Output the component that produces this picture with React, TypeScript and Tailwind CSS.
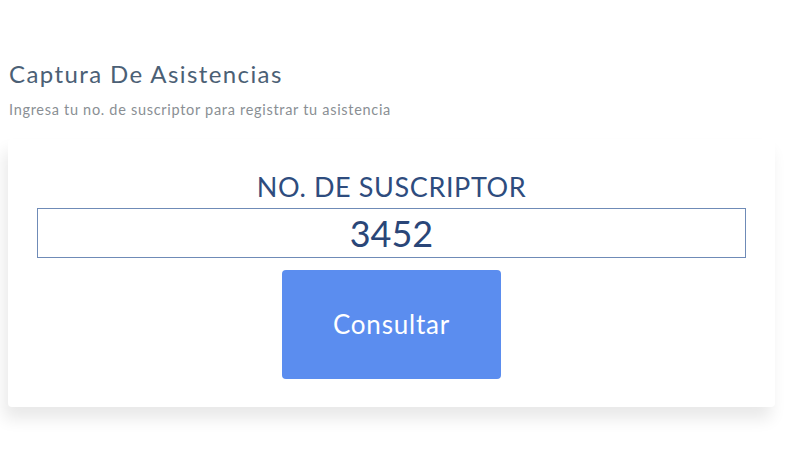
import { useState } from "react";

function App() {
	const [numero, setNumero] = useState("3452");

	return (
		<div className="w-[800px] h-[463px] bg-white font-['Lato',sans-serif] overflow-hidden">
			<div className="pt-[59px] pl-[9px]">
				<h1 className="text-[24px] leading-[30px] text-[#4b6075] tracking-[1.4px]">
					Captura De Asistencias
				</h1>
				<p className="mt-[12px] text-[14.5px] leading-[18px] text-[#8a8f94] tracking-[0.7px]">
					Ingresa tu no. de suscriptor para registrar tu asistencia
				</p>
			</div>

			<div className="ml-[8px] mt-[20px] w-[767px] h-[268px] bg-white rounded-[4px] shadow-[-4px_12px_16px_rgba(0,0,0,0.09)] flex flex-col items-center pt-[30px]">
				<label
					htmlFor="suscriptor"
					className="text-[27px] leading-[36px] text-[#2e4c7e] tracking-[0.6px]"
				>
					NO. DE SUSCRIPTOR
				</label>
				<input
					id="suscriptor"
					value={numero}
					onChange={(e) => setNumero(e.target.value)}
					className="mt-[3px] w-[709px] h-[50px] border-[1.5px] border-[#6f8bb7] text-center text-[36px] leading-[48px] text-[#2a4678] outline-none font-['Lato',sans-serif]"
				/>
				<button
					type="submit"
					className="mt-[12px] w-[219px] h-[109px] rounded-[4px] bg-[#5b8def] text-white text-[26px] tracking-[0.8px]"
				>
					Consultar
				</button>
			</div>
		</div>
	);
}

export default App;
